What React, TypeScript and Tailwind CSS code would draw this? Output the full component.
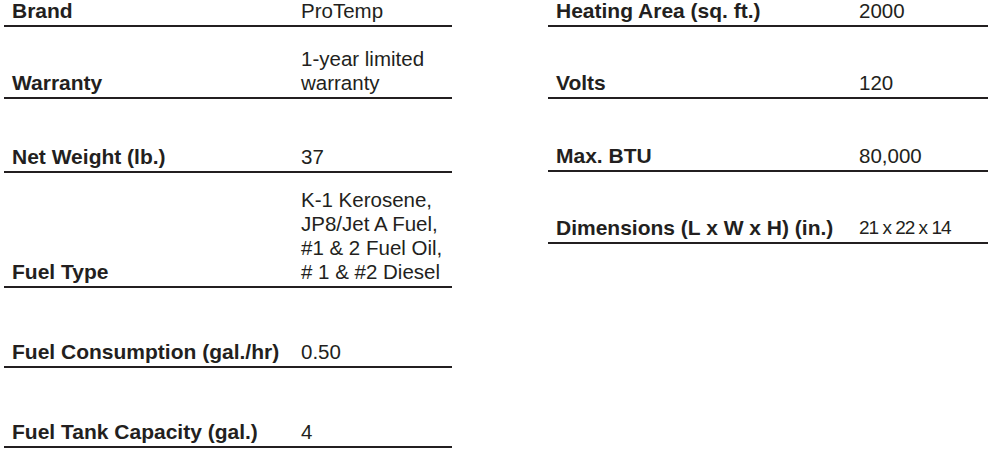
type Spec = {
  label: string;
  value: React.ReactNode;
  h: string;
};

const left: Spec[] = [
  { label: "Brand", value: "ProTemp", h: "h-[27px]" },
  {
    label: "Warranty",
    value: (
      <>
        1-year limited
        <br />
        warranty
      </>
    ),
    h: "h-[72px]",
  },
  { label: "Net Weight (lb.)", value: "37", h: "h-[74px]" },
  {
    label: "Fuel Type",
    value: (
      <>
        K-1 Kerosene,
        <br />
        JP8/Jet A Fuel,
        <br />
        #1 &amp; 2 Fuel Oil,
        <br /># 1 &amp; #2 Diesel
      </>
    ),
    h: "h-[115px]",
  },
  { label: "Fuel Consumption (gal./hr)", value: "0.50", h: "h-[80px]" },
  { label: "Fuel Tank Capacity (gal.)", value: "4", h: "h-[80px]" },
];

const right: Spec[] = [
  { label: "Heating Area (sq. ft.)", value: "2000", h: "h-[27px]" },
  { label: "Volts", value: "120", h: "h-[72px]" },
  { label: "Max. BTU", value: "80,000", h: "h-[73px]" },
  {
    label: "Dimensions (L x W x H) (in.)",
    value: <span className="text-[19px] tracking-[-1px]">21 x 22 x 14</span>,
    h: "h-[72px]",
  },
];

function Row({ spec, labelW }: { spec: Spec; labelW: string }) {
  return (
    <div
      className={`flex items-end border-b-2 border-[#231f20] pb-[2px] pl-[8px] ${spec.h}`}
    >
      <div className={`${labelW} shrink-0 text-[21px] font-bold`}>{spec.label}</div>
      <div className="text-[20.5px]">{spec.value}</div>
    </div>
  );
}

export default function App() {
  return (
    <div
      className="flex h-[451px] w-[992px] overflow-hidden bg-white leading-[24px] text-[#231f20]"
      style={{ fontFamily: '"Liberation Sans", Arial, sans-serif' }}
    >
      <div className="ml-[4px] flex w-[448px] flex-col">
        {left.map((s) => (
          <Row key={s.label} spec={s} labelW="w-[289px]" />
        ))}
      </div>
      <div className="ml-[96px] flex w-[440px] flex-col">
        {right.map((s) => (
          <Row key={s.label} spec={s} labelW="w-[303px]" />
        ))}
      </div>
    </div>
  );
}
